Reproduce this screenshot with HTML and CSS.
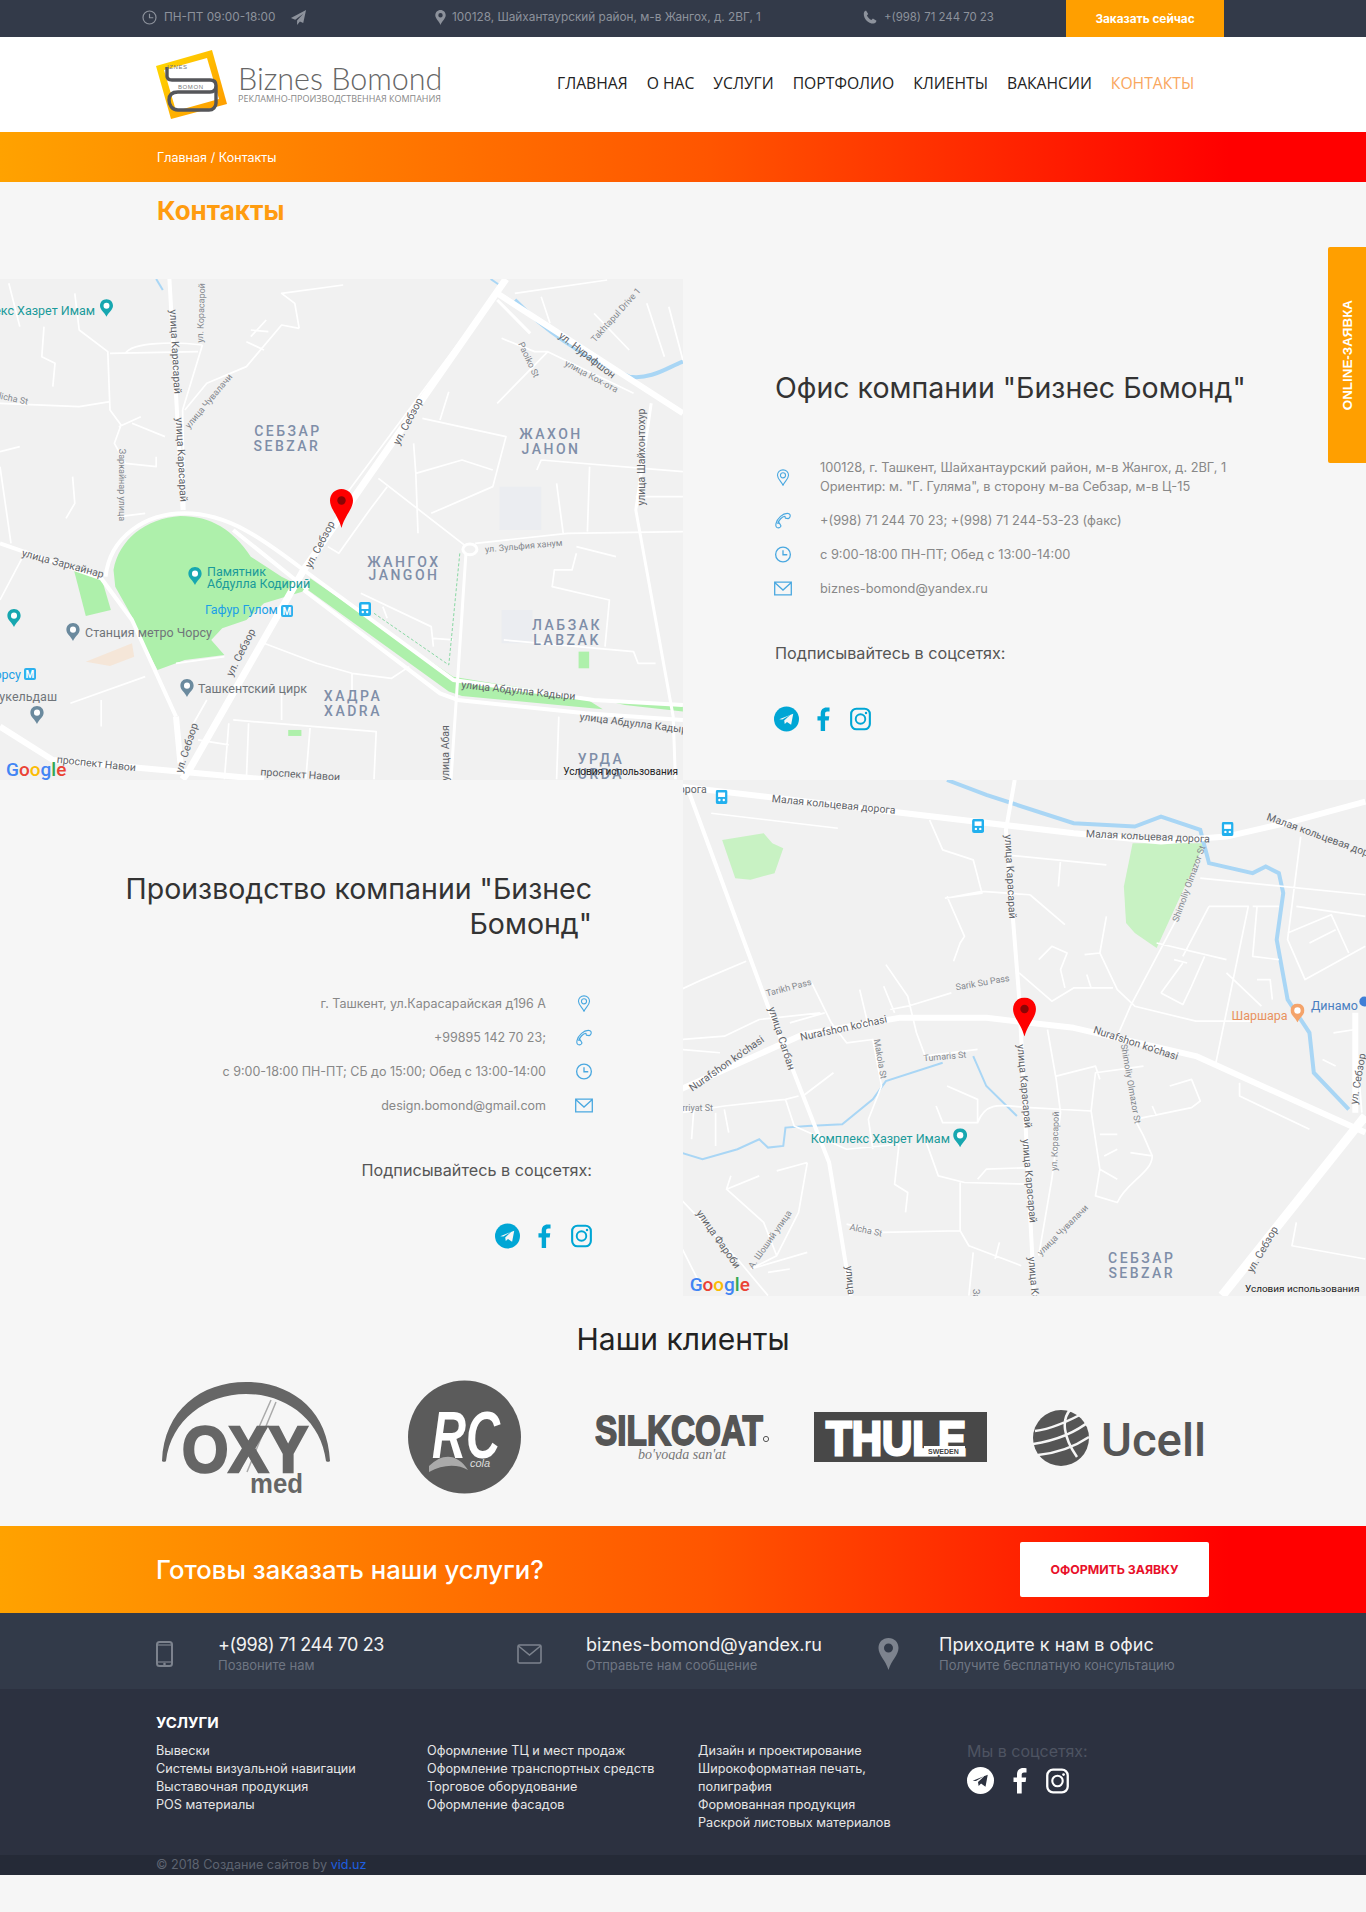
FILE: index.html
```html
<!DOCTYPE html>
<html lang="ru">
<head>
<meta charset="utf-8">
<title>Контакты — Biznes Bomond</title>
<link rel="stylesheet" href="styles.css">
</head>
<body>
<svg class="defs" width="0" height="0" aria-hidden="true">
  <defs>
    <symbol id="i-pin" viewBox="0 0 16 20"><path d="M8 1C4.300 1 1.500 3.800 1.500 7.400 1.500 11.600 6 14.600 8 19c2-4.400 6.500-7.400 6.500-11.600C14.500 3.800 11.700 1 8 1z" fill="none" stroke="currentColor" stroke-width="1.300"/><circle cx="8" cy="7.400" r="3" fill="none" stroke="currentColor" stroke-width="1.300"/></symbol>
    <symbol id="i-phone" viewBox="0 0 18 18"><path d="M13.500 1.500C9 1.500 3 6 1.500 12.500 1 15 2 16.800 4 16.800c1.500 0 2.800-1.300 2.800-2.300L5 11.500l-1.500.7C4.500 8.500 8 5 11 4.500l.5 2 3 .5c1.700-.5 2.500-2.500 2-4-.5-1-1.500-1.500-3-1.500z" fill="none" stroke="currentColor" stroke-width="1.200" stroke-linejoin="round"/></symbol>
    <symbol id="i-clock" viewBox="0 0 18 18"><circle cx="9" cy="9" r="7.800" fill="none" stroke="currentColor" stroke-width="1.400"/><path d="M9 4.500V9.300H13.500" fill="none" stroke="currentColor" stroke-width="1.400"/></symbol>
    <symbol id="i-mail" viewBox="0 0 18 14"><path d="M.7.700h16.600v12.600H.7zM.7 1l8.300 7.500L17.300 1" fill="none" stroke="currentColor" stroke-width="1.300"/></symbol>
    <symbol id="i-tg" viewBox="0 0 26 26"><circle cx="13" cy="13" r="13" fill="currentColor"/><path class="tg-hole" d="M5.500 13.200 20 7.500 17.800 19l-4.300-3-2.300 2.300-.6-3.800 6.500-6-8.500 5z"/></symbol>
    <symbol id="i-fb" viewBox="0 0 14 26"><path d="M4 26V14.500H.5V10H4V7C4 2.800 6.500.5 10.200.5c1.500 0 2.800.1 3.300.2v4.200h-2.400C9.200 4.900 8.700 6 8.700 7.300V10h4.500l-.6 4.500H8.700V26z" fill="currentColor"/></symbol>
    <symbol id="i-ig" viewBox="0 0 22 24"><rect x="1.200" y="1.200" width="19.600" height="21.600" rx="5.500" fill="none" stroke="currentColor" stroke-width="2.200"/><circle cx="11" cy="12" r="5" fill="none" stroke="currentColor" stroke-width="2"/><circle cx="16.800" cy="5.800" r="1.300" fill="currentColor"/></symbol>
    <symbol id="m-pin" viewBox="0 0 23 39"><path d="M11.500 0C5 0 0 5 0 11.500 0 20 8 26 11.500 39 15 26 23 20 23 11.500 23 5 18 0 11.500 0z" fill="#fe0000"/><circle cx="11.500" cy="11.500" r="4.200" fill="#8a0505"/></symbol>
    <symbol id="m-poi" viewBox="0 0 14 19"><path d="M7 0C3 0 0 3 0 7c0 4.500 5 7 7 12 2-5 7-7.500 7-12 0-4-3-7-7-7z" fill="currentColor"/><circle cx="7" cy="7" r="3.200" fill="#fff"/></symbol>
    <symbol id="m-bus" viewBox="0 0 12 14"><rect width="12" height="14" rx="2" fill="#22b0ee"/><rect x="2.500" y="2.500" width="7" height="4.500" fill="#fff"/><circle cx="3.800" cy="10" r="1.200" fill="#fff"/><circle cx="8.200" cy="10" r="1.200" fill="#fff"/></symbol>
  </defs>
</svg>

<a class="online-tab" href="#"><span>ONLINE-ЗАЯВКА</span></a>

<div class="topbar">
  <div class="top-hours">
    <svg class="top-ic ic-clock"><use href="#i-clock"/></svg><span>ПН-ПТ 09:00-18:00</span>
    <svg class="top-plane" viewBox="0 0 18 18"><path d="M17 1 1 9.500l4.500 1.800L14 5 7.500 12.300V17l3-3.700 3.500 1.400z" fill="currentColor"/></svg>
  </div>
  <div class="top-addr">
    <svg class="top-pin" viewBox="0 0 11 15"><path d="M5.500 0C2.500 0 .3 2.300.3 5.200.3 8.500 4 11 5.500 15 7 11 10.700 8.500 10.700 5.200 10.700 2.300 8.500 0 5.500 0zm0 7.400a2.200 2.200 0 1 1 0-4.400 2.200 2.200 0 0 1 0 4.400z" fill="currentColor"/></svg><span>100128, Шайхантаурский район, м-в Жангох, д. 2ВГ, 1</span>
  </div>
  <div class="top-phone">
    <svg class="top-tel" viewBox="0 0 14 14"><path d="M3 .5 5.200 4 3.900 5.400c.8 1.900 2.400 3.500 4.500 4.500L9.900 8.600l3.600 2.200c-.3 1.600-1.500 2.700-3 2.700C5 13.500.5 8.500.8 3.400.9 2 1.800.9 3 .5z" fill="currentColor"/></svg><span>+(998) 71 244 70 23</span>
  </div>
  <a class="top-btn" href="#">Заказать сейчас</a>
</div>

<header class="header">
  <a class="brand" href="#">
    <svg class="brand-mark" viewBox="0 0 71 69">
      <defs><linearGradient id="bm" x1="0" y1="0" x2="1" y2="1"><stop offset="0" stop-color="#ffe000"/><stop offset=".6" stop-color="#ffb000"/><stop offset="1" stop-color="#ff9800"/></linearGradient></defs>
      <path d="M0 16 56 0 71 54 15 69z" fill="url(#bm)"/>
      <path d="M8 20 51 8 63 49 20 61z" fill="#fff"/>
      <path d="M11 17V26c0 3 2 4 5 4H54c4 0 6 2 6 5.500S58 42 54 42H22c-6 0-9 3-9 8s3 10 9 10H53c4 0 7-3 7-7V36" fill="none" stroke="#55565a" stroke-width="3.400"/>
      <text class="bm-t" x="11" y="19">IZNES</text>
      <text class="bm-t" x="22" y="39">BOMON</text>
    </svg>
    <div class="brand-text">
      <div class="brand-name">Biznes Bomond</div>
      <div class="brand-sub">Рекламно-производственная компания</div>
    </div>
  </a>
  <nav class="nav">
    <a href="#">ГЛАВНАЯ</a><a href="#">О НАС</a><a href="#">УСЛУГИ</a><a href="#">ПОРТФОЛИО</a><a href="#">КЛИЕНТЫ</a><a href="#">ВАКАНСИИ</a><a class="active" href="#">КОНТАКТЫ</a>
  </nav>
</header>

<div class="crumbs"><a href="#">Главная</a> / Контакты</div>
<h1 class="page-title">Контакты</h1>

<section class="locations">
  <div class="map">
    <svg class="map-svg" viewBox="0 0 683 501">
      <g transform="translate(0 -9) scale(.44 .3333)">
        <rect x="1135" y="650" width="95" height="130" class="bld"/>
        <rect x="1140" y="1020" width="70" height="100" class="bld"/>
        <path class="park" d="M258 900C270 810 330 745 410 738 480 738 530 780 570 860L640 920 700 960 600 1000 560 1050 505 1075 480 1110 510 1155 420 1170 358 1200 330 1130 300 1040 262 950Z"/>
        <path class="park" d="M168 900 232 930 252 1020 195 1038Z"/>
        <path class="park" d="M705 925 1030 1220 1330 1285 1370 1318 1050 1278 1020 1265 700 960Z"/>
        <path class="park" d="M1370 1290 1552 1310V1325L1420 1305Z"/>
        <rect x="1315" y="1145" width="24" height="50" class="park"/>
        <rect x="655" y="1380" width="30" height="18" class="park"/>
        <path d="M195 1175 300 1120 305 1160 250 1188Z" fill="#f5e6d8"/>
        <path class="water w4" d="M1170 90C1230 170 1320 260 1430 320 1480 330 1520 290 1552 275"/>
        <path class="water w2" d="M1115 27 1135 45"/>
        <path class="water w2" d="M355 27 370 60"/>
        <path class="r r2" d="M170 70 180 180 245 245 250 420 275 465 260 520 285 580 355 590 355 560M285 250C300 215 400 215 460 225M250 250 450 245M460 225 415 420 420 720M680 175 640 165 560 290 470 340 420 420M680 175 670 100 640 70 780 45M570 200 605 150M570 180 610 185M560 215 600 240M20 40 45 170M100 170 95 260 125 280 120 350M0 400 180 410 250 395M270 470 320 440M300 460 375 500M0 545 45 530M165 620 170 700 150 745M270 740 330 730M0 590 25 820M860 625 1060 830M880 650 840 720 770 850 745 830M980 730 1120 650 1150 500 960 445M1000 450 1020 365M940 520 945 610 1050 570 1120 600M945 610 950 790M1220 600 1230 570 1552 605M1340 590 1335 785M1265 640 1280 790M1080 820 1290 790 1552 785M1445 680 1552 680M1310 830 1400 860M1310 850 1300 900 1260 900 1255 950 1385 990 1375 1130M1145 1110 1440 1145 1450 1180 1490 1180M820 970 980 1070 985 1130M870 1010 880 1045M985 1105 1030 1110M1140 205 1215 245 1245 245 1440 370M1245 245 1130 400M1170 70 1380 30M1230 80 1250 160M1350 130 1430 240M1470 100 1510 260M1520 110 1552 270M0 990 60 840M160 1300 330 1220M230 1290 230 1370M400 1180 510 1160M640 1270 640 1350M600 1120 720 1180 800 1210 890 1225 930 1190M800 1210 800 1280M530 1350 855 1385 850 1528M565 1360 560 1528M705 1370 695 1528M520 1360 510 1528M450 1410 520 1425M1270 1340 1265 1528M1095 125 760 720M470 1290 440 1360"/>
        <path class="greenline" d="M850 1030 1020 1185 1045 850"/>
        <path class="r r3" d="M1060 830 1025 1528M1480 400 1445 720 1530 1340 1535 1528M1205 190 1130 90"/>
        <path class="r r4" d="M385 27 415 720M0 820 230 925 300 1050 400 1340M240 920C250 800 330 730 420 730 520 730 600 810 690 900L1030 1230 1350 1290 1552 1305M690 960 1000 1270 1040 1290 1330 1330 1552 1350M530 780 700 960"/>
        <path class="r r6" d="M1130 70 1552 430M0 1370 120 1470 600 1528M400 1340 410 1480"/>
        <path class="r r7" d="M1150 27 690 900 430 1500 415 1528"/>
        <circle cx="1068" cy="838" r="16" class="rnd"/>
      </g>
      <text class="ml" x="95" y="36" text-anchor="end" fill="#1a9a9a">Комплекс Хазрет Имам</text>
      <use href="#m-poi" x="100" y="20" width="13" height="18" class="c-teal"/>
      <text class="ls" transform="translate(172 73) rotate(87)" text-anchor="middle">улица Карасарай</text>
      <text class="ls" transform="translate(178 181) rotate(87)" text-anchor="middle">улица Карасарай</text>
      <text class="lt" transform="translate(204 34) rotate(-88)" text-anchor="middle">ул. Корасарой</text>
      <text class="lt" transform="translate(211 124) rotate(-50)" text-anchor="middle">улица Чувалачи</text>
      <text class="lt" transform="translate(10 122) rotate(12)" text-anchor="middle">Alicha St</text>
      <text class="lt" transform="translate(119 206) rotate(90)" text-anchor="middle">Заркайнар улица</text>
      <text class="ld" x="288" y="157" text-anchor="middle">СЕБЗАР</text>
      <text class="ld" x="287" y="172" text-anchor="middle">SEBZAR</text>
      <text class="ld" x="551" y="160" text-anchor="middle">ЖАХОН</text>
      <text class="ld" x="551" y="175" text-anchor="middle">JAHON</text>
      <text class="ld" x="404" y="288" text-anchor="middle">ЖАНГОХ</text>
      <text class="ld" x="404" y="301" text-anchor="middle">JANGOH</text>
      <text class="ld" x="567" y="351" text-anchor="middle">ЛАБЗАК</text>
      <text class="ld" x="567" y="366" text-anchor="middle">LABZAK</text>
      <text class="ld" x="353" y="422" text-anchor="middle">ХАДРА</text>
      <text class="ld" x="353" y="437" text-anchor="middle">XADRA</text>
      <text class="ld" x="601" y="485" text-anchor="middle">УРДА</text>
      <text class="ld" x="601" y="500" text-anchor="middle">URDA</text>
      <text class="ls" transform="translate(411 144) rotate(-62)" text-anchor="middle">ул. Себзор</text>
      <text class="ls" transform="translate(323 267) rotate(-62)" text-anchor="middle">ул. Себзор</text>
      <text class="ls" transform="translate(244 375) rotate(-63)" text-anchor="middle">ул. Себзор</text>
      <text class="ls" transform="translate(190 470) rotate(-72)" text-anchor="middle">ул. Себзор</text>
      <text class="ls" transform="translate(585 79) rotate(38)" text-anchor="middle">ул. Нурафшон</text>
      <text class="lt" transform="translate(590 100) rotate(28)" text-anchor="middle">улица Кох-ота</text>
      <text class="lt" transform="translate(526 82) rotate(65)" text-anchor="middle">Paoiko St</text>
      <text class="lt" transform="translate(618 38) rotate(-48)" text-anchor="middle">Takhtapul Drive 1</text>
      <text class="ls" transform="translate(645 178) rotate(-90)" text-anchor="middle">улица Шайхонтохур</text>
      <text class="ls" transform="translate(62 288) rotate(15)" text-anchor="middle">улица Заркайнар</text>
      <text class="lt" transform="translate(524 270) rotate(-5)" text-anchor="middle">ул. Зульфия ханум</text>
      <text class="ml" x="207" y="297" fill="#1a9a9a">Памятник</text>
      <text class="ml" x="207" y="309" fill="#1a9a9a">Абдулла Кодирий</text>
      <use href="#m-poi" x="188" y="288" width="14" height="18" class="c-teal"/>
      <text class="ml" x="205" y="335" fill="#1c9fe6">Гафур Гулом</text>
      <rect x="281" y="326" width="12" height="12" rx="2" class="metro"/><text class="metro-t" x="287" y="336" text-anchor="middle">М</text>
      <use href="#m-bus" x="359" y="323" width="12" height="14"/>
      <text class="mg" x="85" y="358">Станция метро Чорсу</text>
      <use href="#m-poi" x="66" y="344" width="14" height="18" class="c-gr"/>
      <text class="mg" x="198" y="414">Ташкентский цирк</text>
      <use href="#m-poi" x="180" y="400" width="14" height="18" class="c-gr"/>
      <text class="ml" x="21" y="400" text-anchor="end" fill="#1c9fe6">Чорсу</text>
      <rect x="24" y="389" width="12" height="12" rx="2" class="metro"/><text class="metro-t" x="30" y="399" text-anchor="middle">М</text>
      <text class="mg" x="57" y="422" text-anchor="end">Кукельдаш</text>
      <use href="#m-poi" x="30" y="427" width="14" height="18" class="c-gr"/>
      <use href="#m-poi" x="7" y="330" width="14" height="18" class="c-teal"/>
      <text class="ls" transform="translate(518 415) rotate(6)" text-anchor="middle">улица Абдулла Кадыри</text>
      <text class="ls" transform="translate(636 448) rotate(7)" text-anchor="middle">улица Абдулла Кадыри</text>
      <text class="ls" transform="translate(449 474) rotate(-90)" text-anchor="middle">улица Абая</text>
      <text class="ls" transform="translate(96 488) rotate(6)" text-anchor="middle">проспект Навои</text>
      <text class="ls" transform="translate(300 499) rotate(4)" text-anchor="middle">проспект Навои</text>
      <use href="#m-pin" x="330" y="210" width="23" height="39"/>
      <text class="gg" x="6" y="497"><tspan fill="#4285f4">G</tspan><tspan fill="#ea4335">o</tspan><tspan fill="#fbbc05">o</tspan><tspan fill="#4285f4">g</tspan><tspan fill="#34a853">l</tspan><tspan fill="#ea4335">e</tspan></text>
      <text class="terms" x="678" y="496" text-anchor="end">Условия использования</text>
    </svg>
  </div>

  <div class="info">
    <h2 class="info-title">Офис компании "Бизнес Бомонд"</h2>
    <ul class="info-list">
      <li><svg class="row-ic"><use href="#i-pin"/></svg><span>100128, г. Ташкент, Шайхантаурский район, м-в Жангох, д. 2ВГ, 1<br>Ориентир: м. "Г. Гулямa", в сторону м-ва Себзар, м-в Ц-15</span></li>
      <li><svg class="row-ic"><use href="#i-phone"/></svg><span>+(998) 71 244 70 23; +(998) 71 244-53-23 (факс)</span></li>
      <li><svg class="row-ic"><use href="#i-clock"/></svg><span>с 9:00-18:00 ПН-ПТ; Обед с 13:00-14:00</span></li>
      <li><svg class="row-ic"><use href="#i-mail"/></svg><span>biznes-bomond@yandex.ru</span></li>
    </ul>
    <p class="info-sub">Подписывайтесь в соцсетях:</p>
    <div class="socials">
      <svg class="s-tg"><use href="#i-tg"/></svg><svg class="s-fb"><use href="#i-fb"/></svg><svg class="s-ig"><use href="#i-ig"/></svg>
    </div>
  </div>

  <div class="info info-right">
    <h2 class="info-title">Производство компании "Бизнес Бомонд"</h2>
    <ul class="info-list">
      <li><svg class="row-ic"><use href="#i-pin"/></svg><span>г. Ташкент, ул.Карасарайская д196 А</span></li>
      <li><svg class="row-ic"><use href="#i-phone"/></svg><span>+99895 142 70 23;</span></li>
      <li><svg class="row-ic"><use href="#i-clock"/></svg><span>с 9:00-18:00 ПН-ПТ; СБ до 15:00; Обед с 13:00-14:00</span></li>
      <li><svg class="row-ic"><use href="#i-mail"/></svg><span>design.bomond@gmail.com</span></li>
    </ul>
    <p class="info-sub">Подписывайтесь в соцсетях:</p>
    <div class="socials">
      <svg class="s-tg"><use href="#i-tg"/></svg><svg class="s-fb"><use href="#i-fb"/></svg><svg class="s-ig"><use href="#i-ig"/></svg>
    </div>
  </div>

  <div class="map">
    <svg class="map-svg" viewBox="0 0 683 517">
      <g transform="translate(-3 0) scale(.4375 .3333)">
        <path class="park2" d="M95 180 190 160 210 190 235 205 215 280 160 300 125 295Z"/>
        <path class="park2" d="M1035 190H1200L1090 505 1040 460 1020 430 1015 320Z"/>
        <path class="water w4" d="M610 0 700 45 900 130 1040 140 1100 110 1190 150 1210 250 1310 280 1340 260 1370 280 1380 340 1365 480 1390 660 1440 760 1450 880 1530 990"/>
        <path class="water w2" d="M0 1120 50 1140 130 1110 180 1080 200 1105 235 1100 240 1045 290 1040 370 1035 440 960 470 905 600 850M670 830 700 920 770 1010"/>
        <path class="r r2" d="M70 100 360 145M570 120 600 210 670 240 690 340 605 355M610 350 650 470 640 490 625 545M800 345 880 435M610 355 690 335 800 345M745 225 975 255M870 240 865 320M470 555 520 650 540 760 560 830 680 810M465 620 490 700M620 640 520 680 480 690M775 580 850 665 900 625 990 625M820 540 850 500 885 520 870 570 880 625M975 410 960 520 1000 630 1040 680 1180 725H1310M925 525 960 520M930 585 940 625M1135 420 1030 680 1000 770M1090 490 1250 540M1100 640 1150 550M1100 640 1150 675 1170 620 1200 530M1160 550 1130 540M1210 380 1150 530M1210 380H1300L1225 855M1310 380H1370M1320 380 1310 530 1370 540M1190 295 1568 345M1410 380 1568 410M1420 170 1390 480 1430 600 1568 500M1390 460 1490 405 1530 520M1440 490 1500 450M1250 580 1330 680M1320 600H1350L1355 660M1495 760 1545 750 1560 1000M1470 840 1500 860M1280 910 1280 950 1440 1050M0 630 50 600 150 545M0 780 100 770 180 720 320 700M250 730 330 700M300 610 345 730 380 790 440 780 460 920 430 1020 440 1110M410 630 430 740M0 810 90 820M0 1000 100 980 240 960 270 950M30 990 25 1080M100 990 110 1060M80 1000 80 1100M280 950 350 880M240 960 260 1040 380 1110 500 1095M500 1095 490 1215 520 1240 515 1300M560 1080 590 1190 650 1210 800 1215M680 1200 700 1170 800 1165M610 920 680 960 680 1030 600 1030 585 980M680 1030C700 960 740 980 800 985L940 995 950 880 1060 860M860 890 950 860 960 900M940 995 960 1170 1000 1200M970 1130 1000 1110M1030 1120 1080 1130 1060 1070 1040 1020 1170 985 1190 965 1170 900 1120 920M1080 1130C1080 1180 1020 1210 1000 1270L950 1250 960 1170M960 1065H1000M1080 980 1090 1010M840 750 860 900 870 1000 850 1200 820 1430M290 1150 220 1175M290 1150 270 1300 220 1430 160 1470M115 1190 105 1230 180 1190M105 1230 190 1330 220 1430M380 1335 460 1360 640 1355 660 1400 780 1460M730 1390 720 1440M640 1210V1355M670 1420 660 1550M0 1260 130 1440 200 1550M0 1400 50 1530M160 1470 290 1420M200 1480 250 1470M1410 1330 1400 1400 1568 1440"/>
        <path class="r r4" d="M20 40 200 680 340 1150 390 1550M765 0 745 150 775 650 800 1300 810 1550"/>
        <path class="r r6" d="M0 20 900 160 1100 185 1250 170 1400 125 1568 65M0 930 280 765 500 715H700L900 745 1180 830 1568 1060M1545 700V1000"/>
        <path class="r r9" d="M1568 1010 1240 1550"/>
      </g>
      <use href="#m-bus" x="32" y="10" width="12" height="14"/>
      <use href="#m-bus" x="289" y="39" width="12" height="14"/>
      <use href="#m-bus" x="539" y="42" width="12" height="14"/>
      <text class="ls" x="6" y="13" text-anchor="middle">дорога</text>
      <text class="ls" transform="translate(150 28) rotate(5.500)" text-anchor="middle">Малая кольцевая дорога</text>
      <text class="ls" transform="translate(465 60) rotate(2.500)" text-anchor="middle">Малая кольцевая дорога</text>
      <text class="ls" transform="translate(642 61) rotate(20)" text-anchor="middle">Малая кольцевая дорога</text>
      <text class="ls" transform="translate(324 97) rotate(87)" text-anchor="middle">улица Карасарай</text>
      <text class="lt" transform="translate(509 105) rotate(-70)" text-anchor="middle">Shimoliy Olmazor St</text>
      <text class="lt" transform="translate(300 206) rotate(-10)" text-anchor="middle">Sarik Su Pass</text>
      <text class="lt" transform="translate(106 211) rotate(-15)" text-anchor="middle">Tarikh Pass</text>
      <text class="ls" transform="translate(161 252) rotate(-12)" text-anchor="middle">Nurafshon ko'chasi</text>
      <text class="ls" transform="translate(45 287) rotate(-35)" text-anchor="middle">Nurafshon ko'chasi</text>
      <text class="ls" transform="translate(452 267) rotate(18)" text-anchor="middle">Nurafshon ko'chasi</text>
      <text class="ml" x="577" y="240" text-anchor="middle" fill="#e8915e">Шаршара</text>
      <use href="#m-poi" x="608" y="224" width="14" height="19" class="c-or"/>
      <text class="ml" x="652" y="230" text-anchor="middle" fill="#4a7fc1">Динамо</text>
      <circle cx="682" cy="222" r="5" fill="#3f7fd6"/>
      <text class="ls" transform="translate(95 260) rotate(72)" text-anchor="middle">улица Сагбан</text>
      <text class="ls" transform="translate(338 307) rotate(85)" text-anchor="middle">улица Карасарай</text>
      <text class="lt" transform="translate(194 280) rotate(80)" text-anchor="middle">Makola St</text>
      <text class="lt" transform="translate(262 280) rotate(-5)" text-anchor="middle">Tumaris St</text>
      <text class="lt" transform="translate(445 305) rotate(80)" text-anchor="middle">Shimoliy Olmazor St</text>
      <text class="lt" x="14" y="332" text-anchor="middle">rriyat St</text>
      <text class="ml" x="197" y="364" text-anchor="middle" fill="#1a9a9a">Комплекс Хазрет Имам</text>
      <use href="#m-poi" x="270" y="349" width="14" height="19" class="c-teal"/>
      <text class="lt" transform="translate(375 362) rotate(-88)" text-anchor="middle">ул. Корасарой</text>
      <text class="ls" transform="translate(343 402) rotate(85)" text-anchor="middle">улица Карасарай</text>
      <text class="lt" transform="translate(182 454) rotate(12)" text-anchor="middle">Alcha St</text>
      <text class="lt" transform="translate(382 453) rotate(-45)" text-anchor="middle">улица Чувалачи</text>
      <text class="lt" transform="translate(89 462) rotate(-55)" text-anchor="middle">А. Шоший улица</text>
      <text class="ls" transform="translate(32 462) rotate(55)" text-anchor="middle">улица Фароби</text>
      <text class="ls" transform="translate(165 520) rotate(85)" text-anchor="middle">улица Сагбан</text>
      <text class="ls" transform="translate(349 520) rotate(85)" text-anchor="middle">улица Карасарай</text>
      <text class="lt" x="290" y="510" transform="rotate(90 290 510)">Заркайнар</text>
      <text class="ld" x="459" y="484" text-anchor="middle">СЕБЗАР</text>
      <text class="ld" x="459" y="499" text-anchor="middle">SEBZAR</text>
      <text class="ls" transform="translate(583 472) rotate(-60)" text-anchor="middle">ул. Себзор</text>
      <text class="ls" transform="translate(679 300) rotate(-80)" text-anchor="middle">ул. Себзор</text>
      <use href="#m-pin" x="330" y="218" width="23" height="39"/>
      <text class="gg" x="6" y="512"><tspan fill="#4285f4">G</tspan><tspan fill="#ea4335">o</tspan><tspan fill="#fbbc05">o</tspan><tspan fill="#4285f4">g</tspan><tspan fill="#34a853">l</tspan><tspan fill="#ea4335">e</tspan></text>
      <text class="terms" x="677" y="513" text-anchor="end">Условия использования</text>
    </svg>
  </div>
</section>

<section class="clients">
  <h2 class="clients-title">Наши клиенты</h2>
  <div class="client-logos">
    <svg class="lg-oxy" viewBox="0 0 170 114">
      <path d="M1 81C3 30 40 2 85 2c45 0 82 28 84 79 0 1-4 1-4 0C160 40 125 14 85 14 45 14 10 40 5 81c0 1-4 1-4 0z" fill="#666"/>
      <path d="M110 20 78 92M115 22 86 92" stroke="#aaa" stroke-width="1.500"/>
      <text class="oxy-t" x="21" y="92" textLength="126" lengthAdjust="spacingAndGlyphs">OXY</text>
      <text class="oxy-m" x="89" y="113" textLength="53" lengthAdjust="spacingAndGlyphs">med</text>
    </svg>
    <svg class="lg-rc" viewBox="0 0 113 114">
      <circle cx="56.500" cy="57" r="56.500" fill="#5b5b5b"/>
      <text class="rc-t" x="24" y="78" textLength="68" lengthAdjust="spacingAndGlyphs">RC</text>
      <path d="M21 86C35 72 50 74 60 90 50 84 35 84 21 92z" fill="#aaa"/>
      <text class="rc-c" x="62" y="87">cola</text>
    </svg>
    <svg class="lg-silk" viewBox="0 0 175 46">
      <text class="silk-t" x="0" y="31" textLength="168" lengthAdjust="spacingAndGlyphs">SILKCOAT</text>
      <circle cx="171" cy="25" r="2.600" fill="none" stroke="#555"/>
      <text class="silk-s" x="87" y="45" text-anchor="middle">bo'yoqda san'at</text>
    </svg>
    <svg class="lg-thule" viewBox="0 0 173 50">
      <rect width="173" height="50" fill="#484848"/>
      <text class="thule-t" x="12" y="43" textLength="140" lengthAdjust="spacingAndGlyphs">THULE</text>
      <rect x="110" y="34" width="41" height="9" fill="#fff"/>
      <text class="thule-s" x="114" y="42">SWEDEN</text>
    </svg>
    <svg class="lg-ucell" viewBox="0 0 173 61">
      <circle cx="28" cy="31" r="28" fill="#555"/>
      <path d="M2 24C20 22 40 12 56 3M0 37C20 34 42 26 58 13M5 48C25 46 44 38 56 30M38 2C28 12 30 30 44 50" fill="none" stroke="#f6f6f6" stroke-width="2.500"/>
      <text class="ucell-t" x="68" y="49" textLength="105" lengthAdjust="spacingAndGlyphs">Ucell</text>
    </svg>
  </div>
</section>

<section class="cta">
  <div class="cta-text">Готовы заказать наши услуги?</div>
  <a class="cta-btn" href="#">ОФОРМИТЬ ЗАЯВКУ</a>
</section>

<section class="strip">
  <div class="strip-item strip-a">
    <svg class="st-phone" viewBox="0 0 17 26"><rect x="1" y="1" width="15" height="24" rx="2.500" fill="none" stroke="currentColor" stroke-width="2"/><rect x="1" y="4" width="15" height="17" fill="none" stroke="currentColor" stroke-width="1.200"/><circle cx="8.500" cy="23" r="1.300" fill="currentColor"/></svg>
    <div><div class="st-title">+(998) 71 244 70 23</div><div class="st-sub">Позвоните нам</div></div>
  </div>
  <div class="strip-item strip-b">
    <svg class="st-mail" viewBox="0 0 25 20"><rect x="1" y="1" width="23" height="18" rx="1.500" fill="none" stroke="currentColor" stroke-width="1.600"/><path d="M1.500 2 12.500 11 23.500 2" fill="none" stroke="currentColor" stroke-width="1.600"/></svg>
    <div><div class="st-title">biznes-bomond@yandex.ru</div><div class="st-sub">Отправьте нам сообщение</div></div>
  </div>
  <div class="strip-item strip-c">
    <svg class="st-pin" viewBox="0 0 21 32"><path d="M10.500 0C4.700 0 .5 4.300.5 10c0 7 7 12 10 22 3-10 10-15 10-22C20.500 4.300 16.300 0 10.500 0zm0 14.500a4.500 4.500 0 1 1 0-9 4.500 4.500 0 0 1 0 9z" fill="currentColor"/></svg>
    <div><div class="st-title">Приходите к нам в офис</div><div class="st-sub">Получите бесплатную консультацию</div></div>
  </div>
</section>

<footer class="footer">
  <div class="foot-main">
    <div class="foot-services">
      <h3 class="foot-h">Услуги</h3>
      <div class="foot-cols">
        <ul><li>Вывески</li><li>Системы визуальной навигации</li><li>Выставочная продукция</li><li>POS материалы</li></ul>
        <ul><li>Оформление ТЦ и мест продаж</li><li>Оформление транспортных средств</li><li>Торговое оборудование</li><li>Оформление фасадов</li></ul>
        <ul><li>Дизайн и проектирование</li><li>Широкоформатная печать, полиграфия</li><li>Формованная продукция</li><li>Раскрой листовых материалов</li></ul>
      </div>
    </div>
    <div class="foot-social">
      <div class="foot-sub">Мы в соцсетях:</div>
      <div class="socials foot-icons">
        <svg class="f-tg"><use href="#i-tg"/></svg><svg class="f-fb"><use href="#i-fb"/></svg><svg class="f-ig"><use href="#i-ig"/></svg>
      </div>
    </div>
  </div>
  <div class="foot-bottom">© 2018 Создание сайтов by <a href="#">vid.uz</a></div>
</footer>
</body>
</html>
```

FILE: styles.css
```css
* { box-sizing: border-box; }
html, body { margin: 0; padding: 0; }
body { background: #f6f6f6; font-family: Inter, "Noto Sans", sans-serif; color: #333; position: relative; min-height: 1912px; }
a { color: inherit; text-decoration: none; }
ul { list-style: none; margin: 0; padding: 0; }
h1, h2, h3, p { margin: 0; }
.defs { position: absolute; }
.tg-hole { fill: var(--hole, #f6f6f6); }

.topbar { height: 37px; background: #333a49; color: #8d929c; font-size: 11.800px; display: flex; align-items: center; padding-left: 142px; }
.topbar svg { display: block; flex: none; }
.topbar > div { display: flex; align-items: center; padding-bottom: 3px; }
.top-hours { width: 293px; }
.top-ic { width: 15px; height: 15px; margin-right: 7px; }
.top-plane { width: 17px; height: 17px; margin-left: 14px; }
.top-addr { width: 428px; }
.top-pin { width: 11px; height: 15px; margin-right: 6px; }
.top-phone { width: 203px; font-size: 11.400px; }
.top-tel { width: 14px; height: 14px; margin-right: 7px; }
.top-btn { width: 158px; height: 37px; background: #ff9f00; color: #fff; font-weight: 700; font-size: 11.800px; display: flex; align-items: center; justify-content: center; padding-top: 1px; }

.header { height: 95px; background: #fff; display: flex; align-items: center; padding-left: 156px; padding-bottom: 3px; }
.brand { display: flex; align-items: center; width: 401px; margin-top: 3px; }
.brand-mark { width: 71px; height: 69px; margin-right: 11px; flex: none; }
.bm-t { font-family: "Liberation Sans", sans-serif; font-size: 6px; fill: #777; letter-spacing: .6px; }
.brand-text { width: 205px; padding-bottom: 4px; }
.brand-name { font-family: Lato, sans-serif; font-weight: 300; font-size: 30.500px; line-height: 32px; color: #666; white-space: nowrap; }
.brand-sub { font-family: "Open Sans", sans-serif; font-size: 9px; line-height: 10px; color: #888; text-transform: uppercase; white-space: nowrap; }
.nav { display: flex; gap: 19px; font-family: "Open Sans", sans-serif; font-size: 15.700px; color: #222; }
.nav .active { color: #f9a75e; }

.crumbs { height: 50px; background: linear-gradient(to right, #ffa200 0%, #ff5500 52%, #ff0000 90%); color: #fff; font-size: 12.500px; display: flex; align-items: center; gap: 4px; padding-left: 157px; }
.page-title { height: 58px; line-height: 58px; margin-bottom: 39px; padding-left: 157px; color: #ff9c0f; font-size: 26px; font-weight: 700; }

.locations { display: grid; grid-template-columns: 683px 683px; grid-template-rows: 501px 516px; }
.map { background: #f1f1f1; overflow: hidden; }
.map-svg { display: block; width: 100%; height: 100%; }
.bld { fill: #ebedf1; }
.park { fill: #aef0ab; }
.park2 { fill: #c8f2c3; }
.water { fill: none; stroke: #a9d6f5; vector-effect: non-scaling-stroke; }
.w2 { stroke-width: 2px; }
.w4 { stroke-width: 4px; }
.r { fill: none; stroke: #fff; stroke-linejoin: round; vector-effect: non-scaling-stroke; }
.r2 { stroke-width: 1.700px; }
.r3 { stroke-width: 3px; }
.r4 { stroke-width: 4px; }
.r6 { stroke-width: 6px; }
.r7 { stroke-width: 7px; }
.r9 { stroke-width: 9px; }
.rnd { fill: #f1f1f1; stroke: #fff; stroke-width: 3px; vector-effect: non-scaling-stroke; }
.greenline { fill: none; stroke: #8ad8a4; stroke-width: 1px; stroke-dasharray: 3 2; vector-effect: non-scaling-stroke; }
.map text { font-family: Roboto, sans-serif; }
.map .ls { font-size: 10.500px; fill: #5f6368; }
.map .lt { font-size: 9px; fill: #84888e; }
.map .ld { font-size: 14px; font-weight: 500; fill: #7f8ea8; letter-spacing: 2.500px; }
.map .ml { font-size: 12.500px; }
.map .mg { font-size: 12.500px; fill: #70757a; }
.map .gg { font-size: 19px; font-weight: 500; }
.map .terms { font-size: 10px; fill: #222; }
.metro { fill: #2cb1ee; }
.map .metro-t { font-size: 10px; font-weight: 700; fill: #fff; }
.c-teal { color: #17a7b0; }
.c-gr { color: #6b8a9e; }
.c-or { color: #f4a36a; }

.info { padding: 92px 60px 0 92px; }
.info-title { font-size: 28.500px; line-height: 34px; font-weight: 400; color: #333; }
.info-list { margin-top: 53px; display: flex; flex-direction: column; gap: 15px; font-size: 12.800px; line-height: 19px; color: #888; }
.info-list li { display: flex; align-items: center; }
.row-ic { width: 18px; height: 17px; color: #4aa8e0; margin: 0 28px 0 -1px; flex: none; }
.info-sub { margin-top: 45px; font-size: 16.200px; line-height: 20px; color: #555; }
.socials { margin-top: 43px; display: flex; align-items: center; height: 26px; color: #00a6d5; }
.s-tg { width: 25px; height: 26px; margin-right: 18px; margin-left: -1px; }
.s-fb { width: 13px; height: 26px; margin-right: 20px; }
.s-ig { width: 21px; height: 24px; }
.info-right { padding: 91px 91px 0 92px; text-align: right; }
.info-right .info-title { line-height: 35px; }
.info-right .info-list { font-size: 12.500px; }
.info-right .info-list li { flex-direction: row-reverse; }
.info-right .row-ic { margin: 0 -1px 0 29px; }
.info-right .socials { justify-content: flex-end; }

.clients { height: 230px; padding-top: 25px; }
.clients-title { height: 36px; line-height: 36px; text-align: center; font-size: 30px; font-weight: 400; color: #222; }
.client-logos { margin-top: 23px; padding-left: 161px; display: flex; align-items: center; }
.client-logos svg { flex: none; display: block; }
.lg-oxy { width: 170px; height: 114px; margin-right: 77px; }
.lg-rc { width: 113px; height: 114px; margin-right: 74px; }
.lg-silk { width: 175px; height: 46px; margin-right: 44px; }
.lg-thule { width: 173px; height: 50px; margin-right: 46px; }
.lg-ucell { width: 173px; height: 61px; }
.oxy-t { font-family: "Liberation Sans", sans-serif; font-weight: 700; font-size: 65px; fill: #666; stroke: #666; stroke-width: 2.500px; }
.oxy-m { font-family: "Liberation Sans", sans-serif; font-weight: 700; font-size: 27px; fill: #666; }
.rc-t { font-family: "Liberation Sans", sans-serif; font-style: italic; font-weight: 700; font-size: 66px; fill: #fff; }
.rc-c { font-family: "Liberation Sans", sans-serif; font-style: italic; font-size: 11px; fill: #ddd; }
.silk-t { font-family: "Liberation Sans", sans-serif; font-weight: 700; font-size: 43px; fill: #555; stroke: #555; stroke-width: 1.800px; }
.silk-s { font-family: "Liberation Serif", serif; font-style: italic; font-size: 14px; fill: #777; }
.thule-t { font-family: "Liberation Sans", sans-serif; font-weight: 700; font-size: 49px; fill: #fff; stroke: #fff; stroke-width: 2.800px; }
.thule-s { font-family: "Liberation Sans", sans-serif; font-size: 7px; font-weight: 700; fill: #444; }
.ucell-t { font-family: Roboto, sans-serif; font-weight: 500; font-size: 46px; fill: #555; }

.cta { height: 87px; background: linear-gradient(to right, #ffa200 0%, #ff5500 52%, #ff0000 90%); display: flex; align-items: center; justify-content: space-between; padding: 0 157px 0 156px; }
.cta-text { color: #fff; font-size: 25.700px; font-weight: 500; }
.cta-btn { width: 189px; height: 55px; background: #fff; border-radius: 2px; color: #e8102a; font-size: 12.300px; font-weight: 700; display: flex; align-items: center; justify-content: center; }

.strip { height: 76px; background: #323a49; display: flex; padding: 5px 0 0 156px; align-items: center; color: #fff; }
.strip-item { display: flex; align-items: center; }
.strip-a { width: 361px; }
.strip-a .st-title { letter-spacing: -.4px; }
.strip-b { width: 361px; }
.strip svg { flex: none; color: #7d838e; }
.st-phone { width: 17px; height: 26px; margin-right: 45px; }
.st-mail { width: 25px; height: 20px; margin-right: 44px; }
.st-pin { width: 21px; height: 32px; margin-right: 40px; }
.st-title { font-size: 18px; line-height: 24px; color: #f2f2f2; }
.st-sub { font-size: 13px; line-height: 17px; color: #6f7683; }

.footer { background: #2c3140; color: #e6e6e6; --hole: #2c3140; }
.foot-main { height: 166px; padding: 25px 0 0 156px; display: flex; }
.foot-services { width: 811px; }
.foot-h { font-size: 15px; line-height: 18px; font-weight: 700; color: #fff; text-transform: uppercase; }
.foot-cols { margin-top: 10px; display: grid; grid-template-columns: 271px 271px 271px; font-size: 12.700px; line-height: 18px; }
.foot-cols ul { max-width: 215px; }
.foot-cols ul:nth-child(2) { max-width: 240px; }
.foot-social { padding-top: 28px; }
.foot-sub { font-size: 16px; line-height: 18px; color: #4e5462; }
.foot-icons { margin-top: 7px; height: 27px; color: #fff; }
.f-tg { width: 27px; height: 27px; margin-right: 19px; }
.f-fb { width: 14px; height: 27px; margin-right: 19px; }
.f-ig { width: 23px; height: 26px; }
.foot-bottom { height: 20px; line-height: 20px; background: #252a37; padding-left: 156px; font-size: 12.600px; color: #5e6471; }
.foot-bottom a { color: #1d5fe0; }

.online-tab { position: absolute; top: 247px; right: 0; width: 38px; height: 216px; background: #ff9f00; border-radius: 2px 0 0 2px; display: flex; align-items: center; justify-content: center; color: #fff; font-family: "Liberation Sans", sans-serif; font-weight: 700; font-size: 13.400px; }
.online-tab span { writing-mode: vertical-rl; transform: rotate(180deg); white-space: nowrap; }
```
